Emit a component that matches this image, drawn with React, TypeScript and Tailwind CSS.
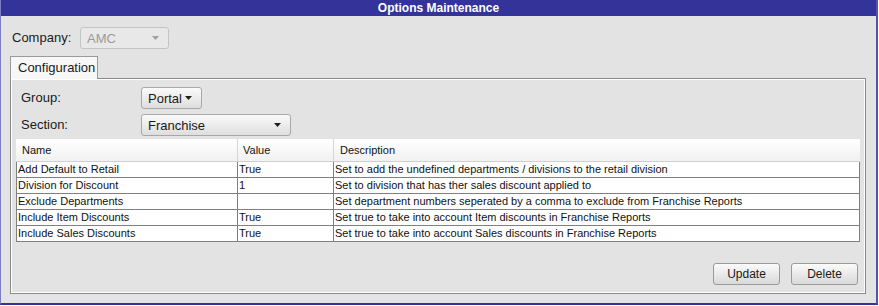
const rows = [
  { name: 'Add Default to Retail', value: 'True', desc: 'Set to add the undefined departments / divisions to the retail division' },
  { name: 'Division for Discount', value: '1', desc: 'Set to division that has ther sales discount applied to' },
  { name: 'Exclude Departments', value: '', desc: 'Set department numbers seperated by a comma to exclude from Franchise Reports' },
  { name: 'Include Item Discounts', value: 'True', desc: 'Set true to take into account Item discounts in Franchise Reports' },
  { name: 'Include Sales Discounts', value: 'True', desc: 'Set true to take into account Sales discounts in Franchise Reports' },
];

function Caret({ muted }: { muted?: boolean }) {
  return (
    <svg width="7" height="4" viewBox="0 0 7 4" aria-hidden="true">
      <path d="M0 0h7L3.5 4z" fill={muted ? '#a0a0a0' : '#202020'} />
    </svg>
  );
}

function Select({ value, width, disabled }: { value: string; width: string; disabled?: boolean }) {
  return (
    <div
      className={`${width} h-[22px] flex items-center justify-between pl-[6px] pr-[9px] rounded-[3px] border ${
        disabled
          ? 'border-[#c4c4c4] bg-[#e8e8e8] text-[#9a9a9a]'
          : 'border-[#a8a8a8] bg-gradient-to-b from-[#fafafa] to-[#dedede] text-[#1a1a1a]'
      }`}
    >
      <span className="text-[13px] leading-none">{value}</span>
      <Caret muted={disabled} />
    </div>
  );
}

function Button({ label }: { label: string }) {
  return (
    <button className="w-[67px] h-[22px] rounded-[3px] border border-[#9a9a9a] bg-gradient-to-b from-[#fbfbfb] to-[#d9d9d9] text-[12px] text-[#1a1a1a]">
      {label}
    </button>
  );
}

export default function App() {
  return (
    <div className="w-[879px] h-[306px] bg-white font-['Liberation_Sans',Arial,sans-serif]">
      <div className="w-[878px] h-[305px] flex flex-col bg-[#e3e3e3] border-l border-l-[#7d7dc0] border-r-2 border-r-[#5555a8] border-b-2 border-b-[#333399]">
        <div className="h-[16px] bg-[#333399] flex items-center justify-center text-white font-bold text-[12px] leading-none">
          Options Maintenance
        </div>

        <div className="flex items-center pl-[11px] pt-[11px]">
          <span className="w-[68px] text-[13px] text-[#1a1a1a]">Company:</span>
          <Select value="AMC" width="w-[89px]" disabled />
        </div>

        <div className="pl-[9px] pt-[7px]">
          <div className="w-[88px] h-[23px] flex items-center pl-[7px] bg-[#f7f7f7] border border-[#9a9a9a] border-b-0 text-[13px] text-[#1a1a1a] relative z-10">
            Configuration
          </div>
          <div className="w-[856px] h-[216px] -mt-px border border-[#8a8a8a] shadow-[inset_1px_1px_0_#ffffff,inset_-1px_-1px_0_#ffffff] flex flex-col">
            <div className="border-t border-white h-[2px]" />
            <div className="flex items-center pl-[10px] pt-[6px]">
              <span className="w-[120px] text-[13px] text-[#1a1a1a]">Group:</span>
              <Select value="Portal" width="w-[61px]" />
            </div>
            <div className="flex items-center pl-[10px] pt-[5px]">
              <span className="w-[120px] text-[13px] text-[#1a1a1a]">Section:</span>
              <Select value="Franchise" width="w-[150px]" />
            </div>

            <div className="ml-[5px] mt-[3px] w-[844px] text-[11px] text-[#111]">
              <div className="flex h-[23px] bg-gradient-to-b from-[#ffffff] to-[#f1f1f1] border-b border-[#d0d0d0]">
                <div className="w-[222px] pl-[6px] flex items-center border-r border-[#d6d6d6]">Name</div>
                <div className="w-[96px] pl-[5px] flex items-center border-r border-[#d6d6d6]">Value</div>
                <div className="flex-1 pl-[6px] flex items-center">Description</div>
              </div>
              <div className="border-l border-r border-[#808080] bg-white">
                {rows.map((r) => (
                  <div key={r.name} className="flex h-[16px] border-b border-[#808080]">
                    <div className="w-[221px] pl-[1px] flex items-center border-r border-[#808080]">{r.name}</div>
                    <div className="w-[96px] pl-[1px] flex items-center border-r border-[#808080]">{r.value}</div>
                    <div className="flex-1 pl-[1px] flex items-center">{r.desc}</div>
                  </div>
                ))}
              </div>
            </div>

            <div className="flex-1" />
            <div className="flex justify-end gap-[11px] pr-[7px] pb-[8px]">
              <Button label="Update" />
              <Button label="Delete" />
            </div>
          </div>
        </div>
      </div>
    </div>
  );
}
